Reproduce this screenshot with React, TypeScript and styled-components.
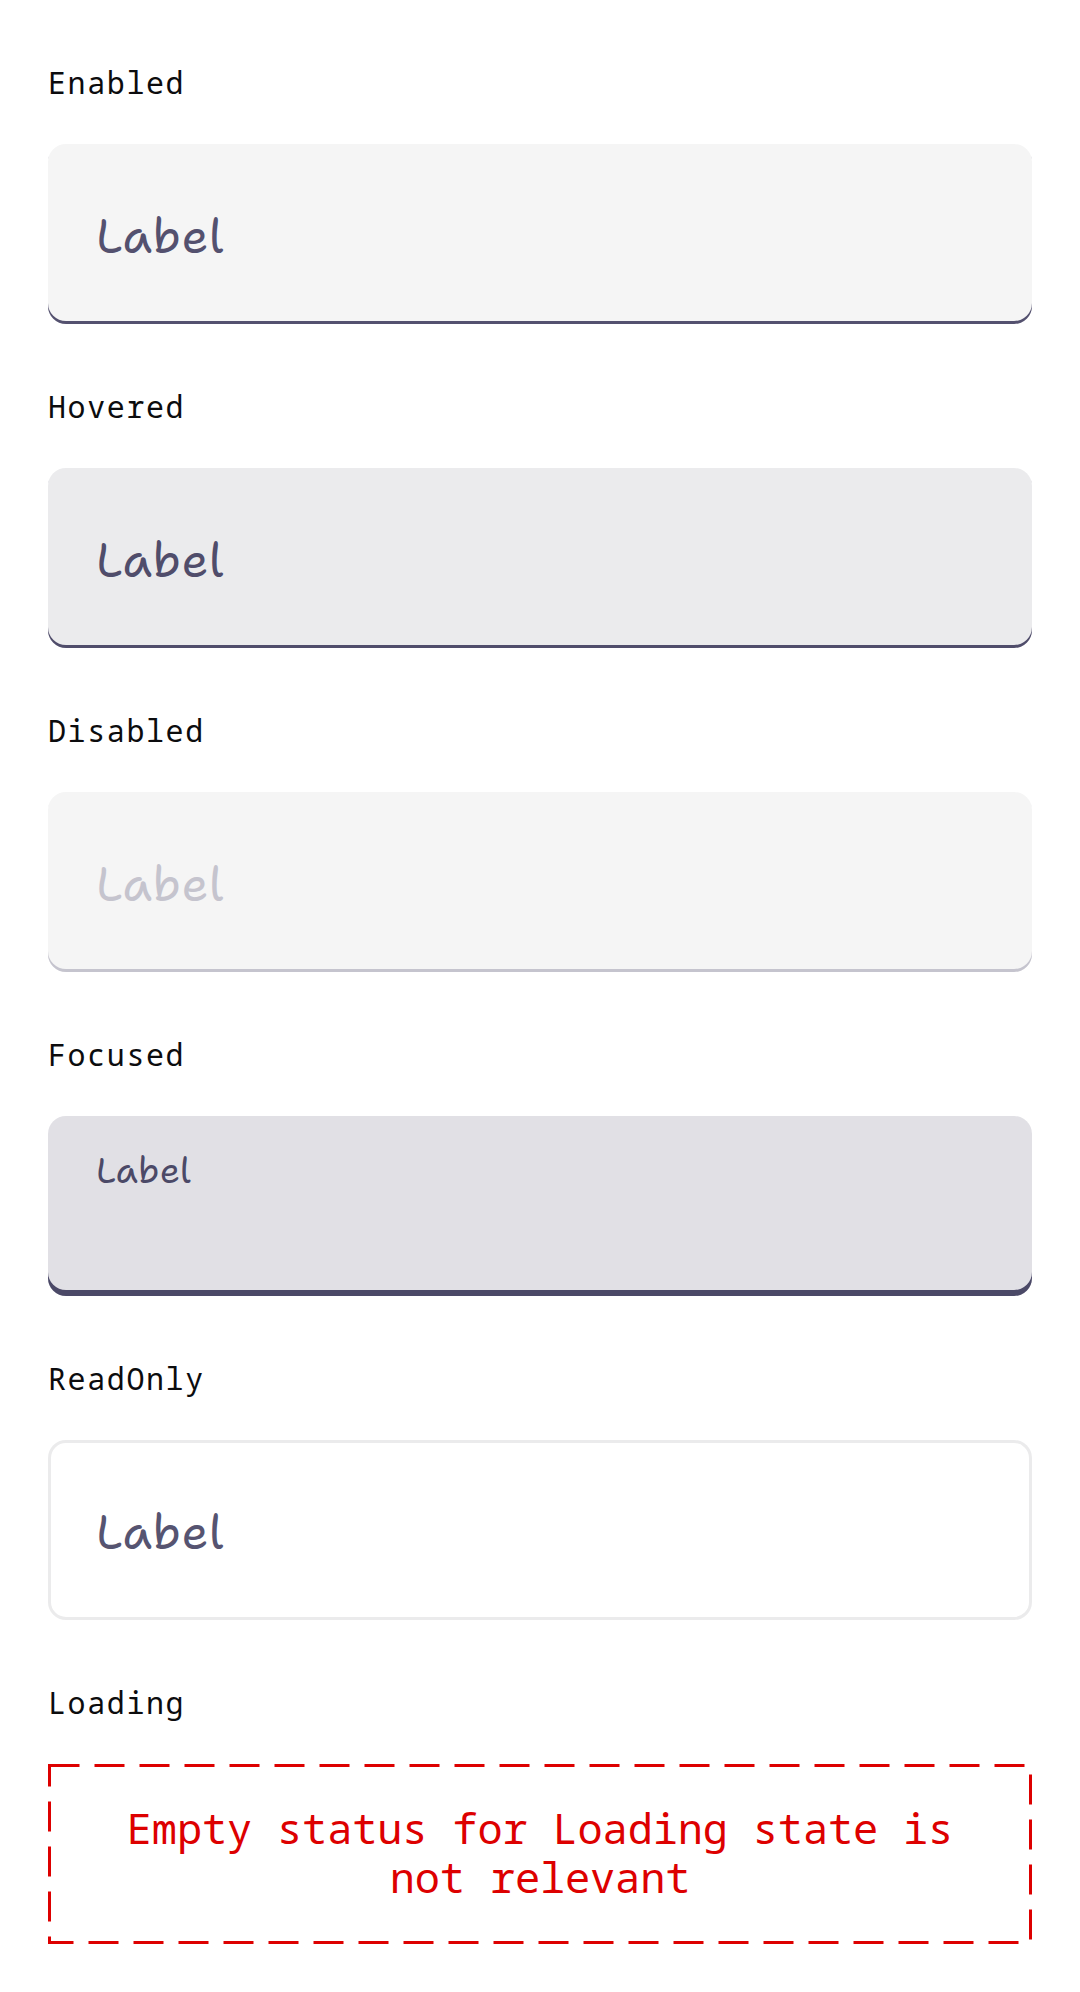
import React from "react";
import styled, { createGlobalStyle, css } from "styled-components";

const GlobalStyle = createGlobalStyle`
  *, *::before, *::after { box-sizing: border-box; }
  body { margin: 0; background: #fff; }
`;

const MONO = '"Noto Sans Mono", "DejaVu Sans Mono", monospace';
const HAND = '"Shantell Sans", "Noto Sans", sans-serif';

type FieldState = "enabled" | "hovered" | "disabled" | "focused" | "readonly";

const Page = styled.main`
  display: flex;
  flex-direction: column;
  min-height: 1992px;
  padding: 0 48px 48px;
  background: #fff;
`;

const Section = styled.section`
  display: flex;
  flex-direction: column;
`;

const Caption = styled.h2`
  margin: 0;
  padding: 64px 0 43px;
  font: 400 30px/37px ${MONO};
  letter-spacing: 1.6px;
  color: #0c0c0e;
`;

const fieldStyles = {
  enabled: css`
    background: #f5f5f5;
    color: #54516f;
    box-shadow: inset 0 -3px 0 #54516f;
  `,
  hovered: css`
    background: #ebebed;
    color: #504d6b;
    box-shadow: inset 0 -3px 0 #504d6b;
  `,
  disabled: css`
    background: #f5f5f5;
    color: #c5c4ce;
    box-shadow: inset 0 -3px 0 #c5c4ce;
  `,
  focused: css`
    background: #e1e0e5;
    color: #4b4967;
    box-shadow: inset 0 -6px 0 #4b4967;
  `,
  readonly: css`
    background: #fff;
    color: #565471;
    box-shadow: inset 0 0 0 3px #ebebec;
  `,
};

const Field = styled.div<{ $state: FieldState }>`
  display: flex;
  align-items: ${(p) => (p.$state === "focused" ? "flex-start" : "center")};
  height: 180px;
  padding: ${(p) => (p.$state === "focused" ? "31px" : "4px")} 48px 0;
  border-radius: 18px;
  ${(p) => fieldStyles[p.$state]}
`;

const FieldLabel = styled.span<{ $small: boolean }>`
  font-family: ${HAND};
  font-weight: 400;
  font-size: ${(p) => (p.$small ? 36 : 48)}px;
  line-height: ${(p) => (p.$small ? 48 : 72)}px;
  letter-spacing: ${(p) => (p.$small ? 0.3 : 0.6)}px;
`;

const EmptyStatus = styled.div`
  position: relative;
  display: flex;
  align-items: center;
  justify-content: center;
  height: 180px;
  padding: 0 48px 5px;
`;

const DashedFrame = styled.svg`
  position: absolute;
  inset: 0;
`;

const EmptyMessage = styled.p`
  margin: 0;
  font: 400 42px/49px ${MONO};
  letter-spacing: -0.16px;
  text-align: center;
  color: #dd0000;
`;

const fields: { caption: string; state: FieldState }[] = [
  { caption: "Enabled", state: "enabled" },
  { caption: "Hovered", state: "hovered" },
  { caption: "Disabled", state: "disabled" },
  { caption: "Focused", state: "focused" },
  { caption: "ReadOnly", state: "readonly" },
];

export default function App() {
  return (
    <>
      <GlobalStyle />
      <Page>
        {fields.map(({ caption, state }) => (
          <Section key={state}>
            <Caption>{caption}</Caption>
            <Field $state={state}>
              <FieldLabel $small={state === "focused"}>Label</FieldLabel>
            </Field>
          </Section>
        ))}
        <Section>
          <Caption>Loading</Caption>
          <EmptyStatus>
            <DashedFrame width="984" height="180" aria-hidden="true">
              <rect
                x="1.5"
                y="1.5"
                width="981"
                height="177"
                fill="none"
                stroke="#dd0000"
                strokeWidth="3"
                strokeDasharray="30 15"
              />
            </DashedFrame>
            <EmptyMessage>Empty status for Loading state is not relevant</EmptyMessage>
          </EmptyStatus>
        </Section>
      </Page>
    </>
  );
}
